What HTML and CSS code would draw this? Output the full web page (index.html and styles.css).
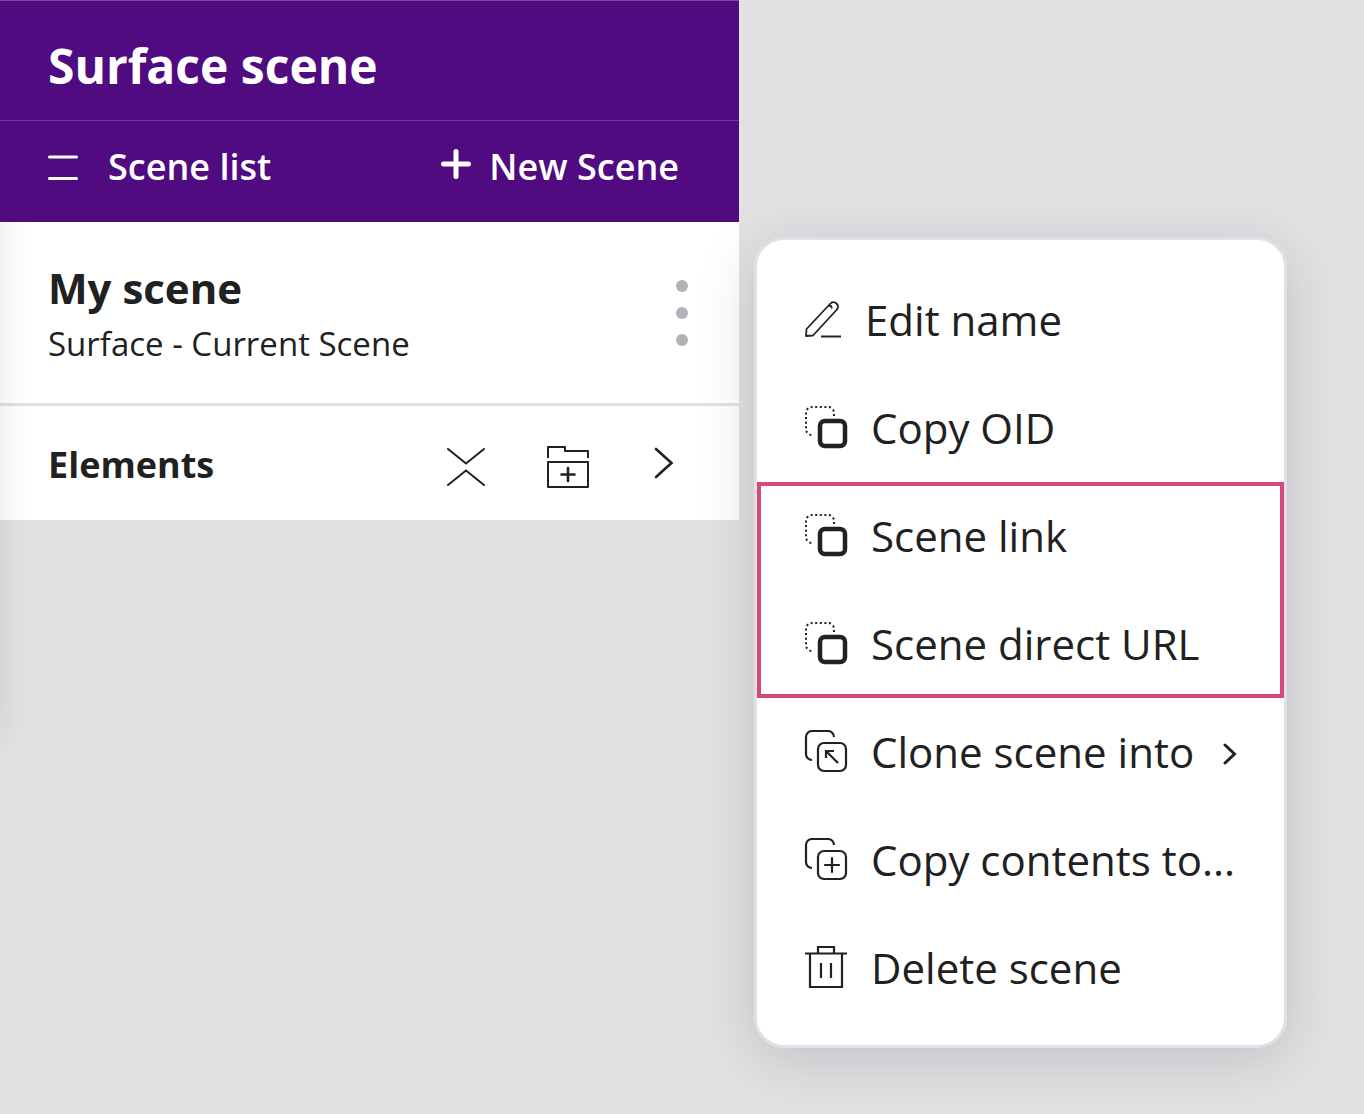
FILE: index.html
```html
<!DOCTYPE html>
<html lang="en">
<head>
<meta charset="utf-8">
<title>Surface scene</title>
<meta name="viewport" content="width=device-width, initial-scale=1">
<link rel="stylesheet" href="styles.css">
</head>
<body>
<svg class="sprite" aria-hidden="true">
  <symbol id="copy" viewBox="0 0 44 44">
    <path d="M30 10V7a6 6 0 0 0-6-6H8a6 6 0 0 0-6 6v16a6 6 0 0 0 6 6h1" fill="none" stroke="currentColor" stroke-width="2" stroke-dasharray="2 2.6"/>
    <rect x="16" y="15" width="25" height="25" rx="5" fill="none" stroke="currentColor" stroke-width="4.5"/>
  </symbol>
  <symbol id="stack" viewBox="0 0 44 44">
    <path d="M30 8a6 6 0 0 0-6-6H8a6 6 0 0 0-6 6v17a6 6 0 0 0 6 6" fill="none" stroke="currentColor" stroke-width="2.200"/>
    <rect x="14" y="14" width="28" height="28" rx="6" fill="none" stroke="currentColor" stroke-width="2.200"/>
  </symbol>
</svg>
<div class="workspace">
  <main class="panel">
    <header class="panel-header">
      <h1 class="panel-title">Surface scene</h1>
      <div class="toolbar">
        <button class="tool" type="button">
          <svg class="icon-list" viewBox="0 -2 30 28" aria-hidden="true"><path d="M1.500 2h27M1.500 23.500h27" stroke="currentColor" stroke-width="3" stroke-linecap="round"/></svg>
          Scene list
        </button>
        <button class="tool tool-new" type="button">
          <svg class="icon-plus" viewBox="0 0 30 36" aria-hidden="true"><path d="M2.500 15h25M15 2.500v25" stroke="currentColor" stroke-width="5" stroke-linecap="round"/></svg>
          New Scene
        </button>
      </div>
    </header>
    <section class="scene">
      <div>
        <h2 class="scene-name">My scene</h2>
        <p class="scene-kind">Surface - Current Scene</p>
      </div>
      <button class="icon-button" type="button" aria-label="Scene options">
        <svg class="icon-dots" viewBox="0 0 12 66" aria-hidden="true"><g fill="#b3b0b8"><circle cx="6" cy="6" r="6"/><circle cx="6" cy="33" r="6"/><circle cx="6" cy="60" r="6"/></g></svg>
      </button>
    </section>
    <section class="elements">
      <h3 class="elements-title">Elements</h3>
      <div class="elements-actions">
        <div class="elements-tools">
          <button class="icon-button" type="button" aria-label="Collapse all">
            <svg class="icon-44" viewBox="0 0 44 44" aria-hidden="true"><path d="M4 4l18 14.500L40 4M4 40l18-14.500L40 40" fill="none" stroke="currentColor" stroke-width="2" stroke-linecap="round"/></svg>
          </button>
          <button class="icon-button" type="button" aria-label="New folder">
            <svg class="icon-44" viewBox="0 0 44 44" aria-hidden="true"><path d="M2 13V2h17v4h23v7M2 17h40v25H2z" fill="none" stroke="currentColor" stroke-width="2" stroke-linejoin="round"/><path d="M15.500 29.500h13M22 23v13" stroke="currentColor" stroke-width="2.600" stroke-linecap="round"/></svg>
          </button>
        </div>
        <button class="icon-button" type="button" aria-label="Expand elements">
          <svg class="icon-chevron" viewBox="0 0 20 40" aria-hidden="true"><path d="M2 2l15.500 14L2 30" fill="none" stroke="currentColor" stroke-width="2.600" stroke-linecap="round"/></svg>
        </button>
      </div>
    </section>
  </main>
  <nav class="menu" aria-label="Scene options">
    <button class="item" type="button">
      <svg class="icon-38" viewBox="0 1 38 38" aria-hidden="true"><path d="M2 36l.5-7L26 4c2-2.400 4.500-2.400 6.500-.5s2 4.500 0 6.500L9 35.500zM24.500 5.500l2.500.5 1 2.500M17 36.500h20" fill="none" stroke="currentColor" stroke-width="1.800" stroke-linejoin="round"/></svg>
      Edit name
    </button>
    <button class="item" type="button"><svg class="icon-44" aria-hidden="true"><use href="#copy"/></svg>Copy OID</button>
    <div class="highlight">
      <button class="item" type="button"><svg class="icon-44" aria-hidden="true"><use href="#copy"/></svg>Scene link</button>
      <button class="item" type="button"><svg class="icon-44" aria-hidden="true"><use href="#copy"/></svg>Scene direct URL</button>
    </div>
    <button class="item" type="button">
      <svg class="icon-44" viewBox="0 1 44 44" aria-hidden="true"><use href="#stack" width="44" height="44"/><path d="M22 29v-7h8M22.500 22.500L34 34" fill="none" stroke="currentColor" stroke-width="2.200"/></svg>
      Clone scene into
      <svg class="icon-submenu" viewBox="0 -4 14 26" aria-hidden="true"><path d="M2 2l9.500 9L2 20" fill="none" stroke="currentColor" stroke-width="3" stroke-linecap="round"/></svg>
    </button>
    <button class="item" type="button">
      <svg class="icon-44" viewBox="0 1 44 44" aria-hidden="true"><use href="#stack" width="44" height="44"/><path d="M21 28h14M28 21v14" stroke="currentColor" stroke-width="2.200" stroke-linecap="round"/></svg>
      Copy contents to...
    </button>
    <button class="item" type="button">
      <svg class="icon-44" viewBox="0 1 44 44" aria-hidden="true"><path d="M1 8.500h42M6 8.500V42h32V8.500M14 8V2h16v6M17 18v15M27 18v15" fill="none" stroke="currentColor" stroke-width="2.200"/></svg>
      Delete scene
    </button>
  </nav>
</div>
</body>
</html>
```
FILE: styles.css
```css
* { box-sizing: border-box; }

body {
  margin: 0;
  min-height: 100vh;
  overflow-x: hidden;
  background: #e2e1e4;
  color: #212121;
  font-family: "Open Sans", "Noto Sans", sans-serif;
}

h1, h2, h3, p { margin: 0; }

button {
  padding: 0;
  border: 0;
  background: none;
  color: inherit;
  font: inherit;
  cursor: pointer;
}

svg { display: block; flex: none; }
.sprite { position: absolute; width: 0; height: 0; }
.icon-list { width: 30px; height: 28px; }
.icon-plus { width: 30px; height: 36px; }
.icon-dots { width: 12px; height: 66px; }
.icon-44 { width: 44px; height: 44px; }
.icon-38 { width: 38px; height: 38px; }
.icon-chevron { width: 20px; height: 40px; }
.icon-submenu { width: 14px; height: 26px; margin-left: auto; }

.workspace {
  position: relative;
  display: flex;
  align-items: flex-start;
}

/* Shadow cast by the sidebar beyond the left edge */
.workspace::before {
  content: "";
  position: absolute;
  top: 180px;
  left: -40px;
  width: 40px;
  height: 560px;
  box-shadow: 0 0 36px rgba(0, 0, 0, 0.1);
}

.panel { flex: 1; min-width: 0; }

.panel-header {
  position: relative;
  border-top: 1px solid #7b4a9f;
  background: #500b80;
  color: #fff;
}

.panel-title {
  padding: 33px 48px 22px;
  border-bottom: 1px solid #6f3996;
  font-size: 48px;
  line-height: 64px;
  font-weight: 700;
}

.toolbar {
  display: flex;
  justify-content: space-between;
  padding: 20px 60px 29px 48px;
}

.tool {
  display: flex;
  align-items: center;
  gap: 30px;
  font-size: 36px;
  line-height: 52px;
  font-weight: 600;
}

.tool-new { gap: 18px; }

.scene {
  display: flex;
  justify-content: space-between;
  padding: 35px 51px 34px 48px;
  border-bottom: 3px solid #e2e1e4;
  background: #fff;
}

.scene-name { font-size: 42px; line-height: 62px; font-weight: 700; }
.scene-kind { font-size: 33px; line-height: 50px; }

.elements {
  display: flex;
  align-items: center;
  justify-content: space-between;
  padding: 33px 65px 29px 48px;
  background: #fff;
}

.elements-title { font-size: 36px; line-height: 52px; font-weight: 700; }
.elements-actions { display: flex; align-items: center; gap: 64px; padding-top: 4px; }
.elements-tools { display: flex; gap: 58px; }

.menu {
  position: relative;
  flex: none;
  width: 533px;
  margin: 237px 77px 64px 15px;
  padding: 26px 0 23px;
  border: 3px solid #e2e0e6;
  border-radius: 30px;
  background: #fff;
  box-shadow: 0 12px 60px rgba(10, 0, 15, 0.15);
}

.item {
  display: flex;
  align-items: center;
  gap: 23px;
  width: 100%;
  height: 108px;
  padding: 0 47px;
  font-size: 42px;
  line-height: 60px;
}

.highlight { outline: 4px solid #d54a7b; outline-offset: -4px; }
```
